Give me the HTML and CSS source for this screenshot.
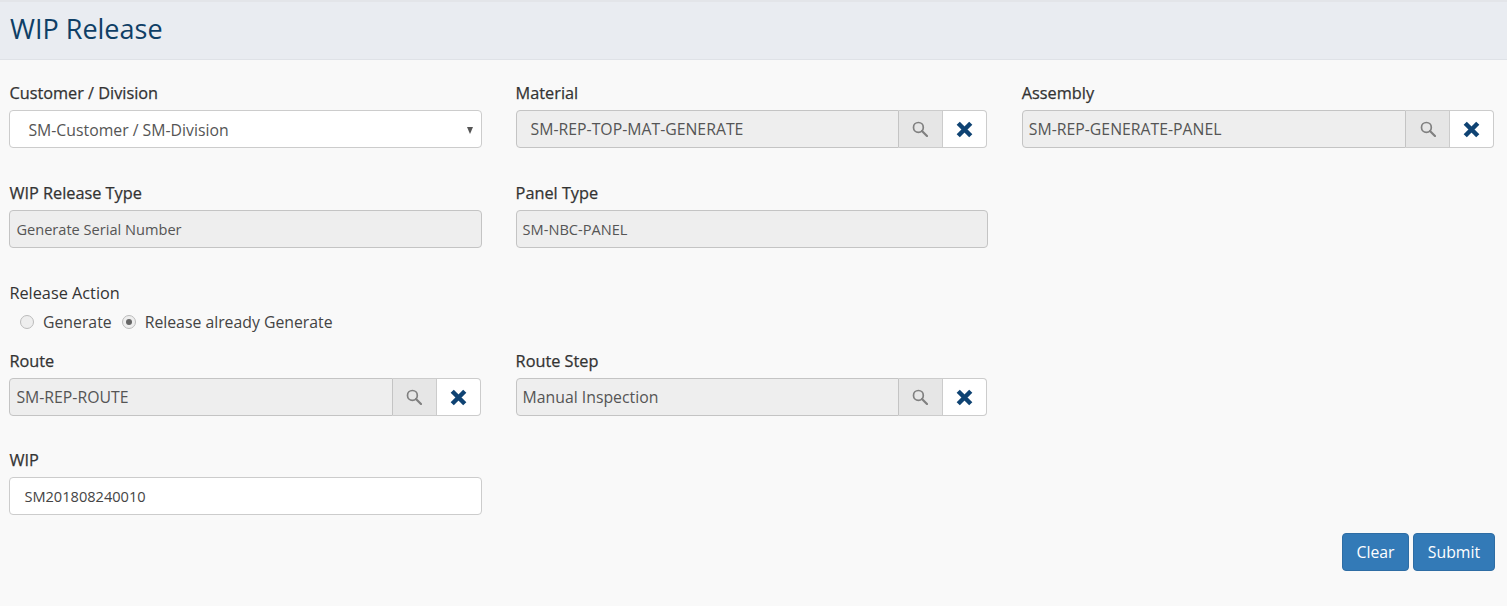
FILE: index.html

```html
<!DOCTYPE html>
<html lang="en">
<head>
  <meta charset="UTF-8" />
  <title>WIP Release</title>
  <link rel="stylesheet" href="styles.css">
</head>
<body>
  <svg class="icon-defs" width="0" height="0">
    <symbol id="icon-search" viewBox="0 0 16 16">
      <circle cx="6.4" cy="6.4" r="4.9" fill="none" stroke="currentColor" stroke-width="1.7"/>
      <path d="M10 10l5 5" fill="none" stroke="currentColor" stroke-width="2.2" stroke-linecap="round"/>
    </symbol>
    <symbol id="icon-times" viewBox="0 0 16 16">
      <path d="M2.1 2.1l11.8 11.8M13.9 2.1l-11.8 11.8" fill="none" stroke="currentColor" stroke-width="4.2"/>
    </symbol>
  </svg>

  <div class="page-header">
    <h1>WIP Release</h1>
  </div>

  <form class="release-form">
    <div class="form-row">
      <div class="field">
        <label>Customer / Division</label>
        <div class="select-box">SM-Customer / SM-Division<span class="caret"></span></div>
      </div>
      <div class="field">
        <label>Material</label>
        <div class="lookup inset">
          <div class="control readonly">SM-REP-TOP-MAT-GENERATE</div>
          <span class="addon search"><svg><use href="#icon-search"/></svg></span>
          <span class="addon clear"><svg><use href="#icon-times"/></svg></span>
        </div>
      </div>
      <div class="field">
        <label>Assembly</label>
        <div class="lookup wide">
          <div class="control readonly">SM-REP-GENERATE-PANEL</div>
          <span class="addon search"><svg><use href="#icon-search"/></svg></span>
          <span class="addon clear"><svg><use href="#icon-times"/></svg></span>
        </div>
      </div>
    </div>

    <div class="form-row">
      <div class="field">
        <label>WIP Release Type</label>
        <div class="control readonly">Generate Serial Number</div>
      </div>
      <div class="field">
        <label>Panel Type</label>
        <div class="control readonly">SM-NBC-PANEL</div>
      </div>
    </div>

    <div class="form-row action-row">
      <div class="field">
        <label>Release Action</label>
        <div class="radios">
          <span class="radio"></span><span class="radio-label">Generate</span>
          <span class="radio checked"></span><span class="radio-label">Release already Generate</span>
        </div>
      </div>
    </div>

    <div class="form-row route-row">
      <div class="field">
        <label>Route</label>
        <div class="lookup">
          <div class="control readonly">SM-REP-ROUTE</div>
          <span class="addon search"><svg><use href="#icon-search"/></svg></span>
          <span class="addon clear"><svg><use href="#icon-times"/></svg></span>
        </div>
      </div>
      <div class="field">
        <label>Route Step</label>
        <div class="lookup">
          <div class="control readonly">Manual Inspection</div>
          <span class="addon search"><svg><use href="#icon-search"/></svg></span>
          <span class="addon clear"><svg><use href="#icon-times"/></svg></span>
        </div>
      </div>
    </div>

    <div class="form-row wip-row">
      <div class="field">
        <label>WIP</label>
        <div class="control wip">SM201808240010</div>
      </div>
    </div>

    <div class="form-actions">
      <button type="button" class="btn btn-clear">Clear</button>
      <button type="button" class="btn btn-submit">Submit</button>
    </div>
  </form>
</body>
</html>
```

FILE: styles.css

```css
* {
  box-sizing: border-box;
}
body {
  margin: 0;
  font-family: 'Open Sans', sans-serif;
  font-size: 14.6px;
  background-color: #f9f9f9;
  color: #333;
  min-height: 606px;
  overflow: hidden;
}
.icon-defs {
  display: block;
  height: 0;
}
.page-header {
  height: 60px;
  background-color: #e9ecf1;
  border-top: 2px solid #e3e5e9;
  border-bottom: 1px solid #dfe2e7;
  padding: 9px 10px 0;
}
h1 {
  margin: 0;
  font-size: 27px;
  line-height: 36px;
  font-weight: 400;
  color: #0f3f66;
}
.release-form {
  padding: 23px 13px 0 9.4px;
}
.form-row {
  display: grid;
  grid-template-columns: repeat(3, 1fr);
  column-gap: 34px;
  height: 100px;
}
.action-row {
  height: 68px;
}
.route-row {
  height: 99px;
}
.wip-row {
  height: 84px;
}
label {
  display: block;
  height: 27px;
  line-height: 20px;
  font-size: 16.3px;
  -webkit-text-stroke: 0.25px #333;
  color: #333;
}
.action-row label {
  -webkit-text-stroke: 0;
  height: 20px;
}
.control, .select-box {
  height: 38px;
  line-height: 37px;
  border: 1px solid #ccc;
  border-radius: 4px;
  background-color: #fff;
  white-space: nowrap;
}
.control {
  padding: 0 6px;
  color: #555;
  flex: 1;
  min-width: 0;
}
.readonly {
  background-color: #eee;
  border-color: #c4c4c4;
}
.wip {
  padding-left: 14px;
  color: #444;
}
.select-box {
  position: relative;
  padding-left: 18px;
  font-size: 15.8px;
  line-height: 38px;
  color: #555;
}
.caret {
  position: absolute;
  right: 8px;
  top: 16px;
  border-left: 3.5px solid transparent;
  border-right: 3.5px solid transparent;
  border-top: 7px solid #555;
}
.lookup {
  display: flex;
  height: 38px;
  margin-right: 1px;
  font-size: 15.8px;
}
.lookup.wide {
  margin-right: 0;
}
.lookup .control {
  border-radius: 4px 0 0 4px;
  border-right: 1px solid #c4c4c4;
}
.lookup.inset .control {
  padding-left: 14px;
}
.addon {
  width: 44px;
  height: 38px;
  flex: none;
  display: flex;
  align-items: center;
  justify-content: center;
  border: 1px solid #ccc;
  border-left: 0;
}
.addon.search {
  background-color: #e6e6e6;
  color: #808080;
}
.addon.search svg {
  width: 16px;
  height: 16px;
}
.addon.clear {
  background-color: #fff;
  color: #0f4373;
  border-radius: 0 4px 4px 0;
}
.addon.clear svg {
  width: 17px;
  height: 17px;
}
.radios {
  display: flex;
  align-items: center;
  height: 24px;
  margin-top: 7px;
  padding-left: 10.6px;
  font-size: 15.8px;
  color: #444;
}
.radio {
  width: 14px;
  height: 14px;
  border-radius: 50%;
  border: 1px solid #bbb;
  background-color: #eee;
  margin-right: 9px;
  display: flex;
  align-items: center;
  justify-content: center;
}
.radio.checked::after {
  content: "";
  width: 6px;
  height: 6px;
  border-radius: 50%;
  background-color: #666;
}
.radio-label {
  margin-right: 10px;
}
.form-actions {
  display: flex;
  justify-content: flex-end;
  gap: 4px;
  margin-right: -1px;
  margin-top: -1px;
}
.btn {
  height: 38px;
  padding: 0;
  font-family: inherit;
  font-size: 15.8px;
  color: #fff;
  background-color: #337ab7;
  border: 1px solid #2e6da4;
  border-radius: 4px;
}
.btn-clear {
  width: 67px;
}
.btn-submit {
  width: 82px;
}
```
